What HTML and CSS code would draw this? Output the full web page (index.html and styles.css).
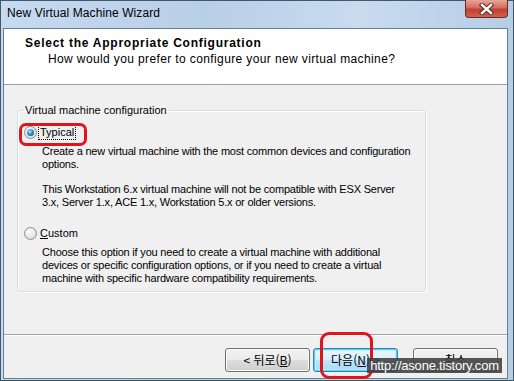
FILE: index.html
```html
<!DOCTYPE html>
<html lang="ko">
<head>
    <meta charset="UTF-8" />
    <title>New Virtual Machine Wizard</title>
    <link rel="stylesheet" href="styles.css">
</head>
<body>
    <div class="window">
        <div class="titlebar">
            <span class="title">New Virtual Machine Wizard</span>
            <span class="close-btn">
                <svg width="19" height="12" viewBox="0 0 19 12">
                    <path d="M5 2 L14 10 M14 2 L5 10" stroke="#5a2a24" stroke-width="4.4" stroke-linecap="square" />
                    <path d="M5 2 L14 10 M14 2 L5 10" stroke="#fff" stroke-width="2.4" stroke-linecap="square" />
                </svg>
            </span>
        </div>
        <div class="client">
            <div class="header">
                <h1>Select the Appropriate Configuration</h1>
                <p>How would you prefer to configure your new virtual machine?</p>
            </div>
            <div class="main">
                <fieldset class="group">
                    <legend>Virtual machine configuration</legend>
                    <div class="option">
                        <span class="radio checked"></span>
                        <span class="option-label focused">Typical</span>
                    </div>
                    <p class="desc">Create a new virtual machine with the most common devices and configuration<br>options.</p>
                    <p class="desc">This Workstation 6.x virtual machine will not be compatible with ESX Server<br>3.x, Server 1.x, ACE 1.x, Workstation 5.x or older versions.</p>
                    <div class="option custom">
                        <span class="radio"></span>
                        <span class="option-label"><u>C</u>ustom</span>
                    </div>
                    <p class="desc">Choose this option if you need to create a virtual machine with additional<br>devices or specific configuration options, or if you need to create a virtual<br>machine with specific hardware compatibility requirements.</p>
                </fieldset>
            </div>
            <div class="footer">
                <button class="btn">&lt; 뒤로(<u>B</u>)</button>
                <button class="btn default">다음(<u>N</u>) &gt;</button>
                <button class="btn cancel">취소</button>
            </div>
        </div>

        <!-- 주석 표시 (빨간 박스, 워터마크) -->
        <div class="mark mark-typical"></div>
        <div class="mark mark-next"></div>
        <div class="watermark">http://asone.tistory.com</div>
    </div>
</body>
</html>
```

FILE: styles.css
```css
* {
    box-sizing: border-box;
}
body {
    margin: 0;
    font-family: 'Liberation Sans', 'Noto Sans CJK KR', sans-serif;
    font-size: 11px;
    color: #000;
    background: #fff;
}
.window {
    position: relative;
    width: 514px;
    height: 381px;
    display: flex;
    flex-direction: column;
    border: 1px solid #44586c;
    border-bottom-color: #2f5566;
    padding: 0 5px 1px 2px;
    background: linear-gradient(90deg, #c6daf0 0%, #b8cfe8 40%, #c8dbef 70%, #b6cde6 100%);
}
.titlebar {
    height: 27px;
    display: flex;
    align-items: flex-start;
    flex-shrink: 0;
}
.title {
    font-size: 12px;
    padding: 5px 0 0 4px;
    letter-spacing: 0.1px;
}
.close-btn {
    margin-left: auto;
    width: 43px;
    height: 18px;
    margin-top: -1px;
    display: flex;
    align-items: center;
    justify-content: center;
    border: 1px solid #6a2a22;
    border-top: none;
    border-radius: 0 0 4px 4px;
    background: linear-gradient(#e6a89c 0%, #d86a5b 45%, #c0402f 55%, #d0614f 100%);
}
.client {
    flex: 1;
    display: flex;
    flex-direction: column;
    background: #f0f0f0;
    border: 1px solid #6a7d90;
}
.header {
    height: 56px;
    flex-shrink: 0;
    background: #fff;
    border-bottom: 1px solid #a0a0a0;
    padding: 7px 0 0 21px;
}
.header h1 {
    margin: 0;
    font-size: 12px;
    font-weight: bold;
    line-height: 14px;
    letter-spacing: 0.75px;
}
.header p {
    margin: 2px 0 0 23px;
    font-size: 12px;
    line-height: 14px;
    letter-spacing: 0.38px;
}
.main {
    flex: 1;
    padding: 19px 0 0 13px;
    border-bottom: 1px solid #a0a0a0;
    box-shadow: 0 1px 0 #fff;
}
.group {
    margin: 0;
    min-width: 0;
    width: 409px;
    height: 188px;
    border: 1px solid #d5dfe5;
    border-radius: 3px;
    box-shadow: inset 1px 1px 0 #fff, 1px 1px 0 #fff;
    padding: 7px 6px 0 6px;
}
.group legend {
    padding: 0 1px;
    line-height: 13px;
    color: #000;
}
.option {
    display: flex;
    align-items: center;
    height: 17px;
}
.option.custom {
    margin-top: 16px;
}
.radio {
    width: 13px;
    height: 13px;
    border-radius: 50%;
    border: 1px solid #8e8f8f;
    background: radial-gradient(circle at 40% 35%, #fff 0%, #e6e6e6 55%, #cfcfcf 100%);
    display: flex;
    align-items: center;
    justify-content: center;
}
.radio.checked::after {
    content: '';
    width: 7px;
    height: 7px;
    border-radius: 50%;
    background: radial-gradient(circle at 40% 35%, #a6e1fb 0%, #2a8bc4 50%, #0c3f6c 100%);
}
.option-label {
    margin-left: 1px;
    padding: 0 1px;
    border: 1px solid transparent;
    line-height: 13px;
}
.option-label.focused {
    border: 1px dotted #000;
}
.desc {
    margin: 1px 0 12px 18px;
    line-height: 13px;
    white-space: nowrap;
    letter-spacing: -0.2px;
}
.option + .desc {
    margin-top: 4px;
}
.footer {
    height: 43px;
    flex-shrink: 0;
    display: flex;
    justify-content: flex-end;
    align-items: flex-start;
    padding: 13px 9px 0 0;
    gap: 3px;
}
.btn {
    width: 85px;
    height: 24px;
    border: 1px solid #707070;
    border-radius: 3px;
    background: linear-gradient(#f2f2f2 0%, #ebebeb 48%, #dddddd 52%, #cfcfcf 100%);
    box-shadow: inset 0 0 0 1px #fcfcfc;
    font-family: 'Noto Sans CJK KR', 'Liberation Sans', sans-serif;
    font-size: 12px;
    line-height: 14px;
    padding: 0;
    color: #000;
}
.btn.default {
    border-color: #3c7fb1;
    box-shadow: inset 0 0 0 1px #48d8fb, inset 0 0 0 2px #c6ecfb;
    background: linear-gradient(#eaf6fd 0%, #d9f0fc 48%, #bee6fd 52%, #a7d9f5 100%);
}
.btn.cancel {
    margin-left: 12px;
}
.mark {
    position: absolute;
    border: 3px solid #e3121b;
    border-radius: 7px;
}
.mark-typical {
    left: 18px;
    top: 122px;
    width: 68px;
    height: 23px;
}
.mark-next {
    left: 319px;
    top: 331px;
    width: 53px;
    height: 47px;
    border-radius: 9px;
}
.watermark {
    position: absolute;
    left: 366px;
    top: 357px;
    width: 135px;
    height: 15px;
    background: rgba(64, 64, 64, 0.88);
    color: #fff;
    font-size: 13px;
    line-height: 15px;
    text-align: center;
    white-space: nowrap;
    letter-spacing: -0.2px;
}
```
